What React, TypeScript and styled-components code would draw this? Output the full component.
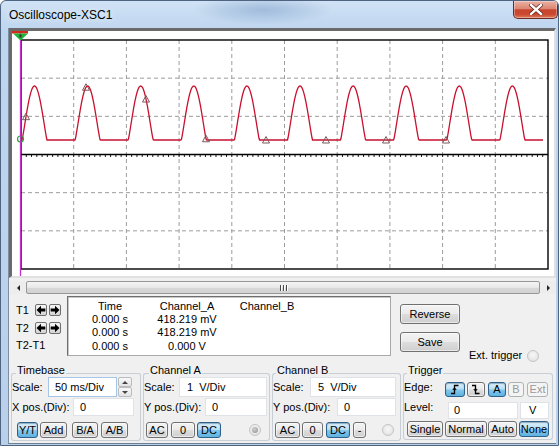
import React from "react";
import styled, { createGlobalStyle, css } from "styled-components";

const GlobalStyle = createGlobalStyle`
  html, body { margin: 0; padding: 0; background: #ffffff; }
  body { font-family: "Liberation Sans", Arial, sans-serif; font-size: 11px; color: #000; }
  *, *::before, *::after { box-sizing: border-box; }
`;

/* ---------- window chrome ---------- */
const Window = styled.div`
  width: 559px;
  height: 446px;
  border: 1px solid #4e6480;
  border-radius: 6px 6px 0 0;
  display: flex;
  flex-direction: column;
  overflow: hidden;
  background:
    radial-gradient(ellipse 70px 15px at 262px 9px, rgba(110, 145, 190, 0.45), rgba(110, 145, 190, 0) 100%),
    linear-gradient(180deg, #d0e2f5 0px, #bfd6ef 28px, #b9d0ea 100%);
`;

const TitleBar = styled.div`
  height: 27px;
  flex: none;
  display: flex;
  justify-content: space-between;
  align-items: flex-start;
`;

const Title = styled.div`
  margin: 7px 0 0 8px;
  font-size: 12px;
  line-height: 14px;
  color: #000;
  text-shadow: 0 0 6px rgba(255, 255, 255, 0.9);
`;

const CloseButton = styled.div`
  width: 45px;
  height: 18px;
  border: 1px solid #6b2a22;
  border-top: none;
  border-radius: 0 0 5px 5px;
  background: linear-gradient(180deg, #eab2a6 0%, #dd8672 45%, #c8452d 52%, #c9492f 78%, #e07a5c 100%);
  box-shadow: inset 0 0 0 1px rgba(255, 255, 255, 0.35);
  display: flex;
  align-items: center;
  justify-content: center;
`;

const Frame = styled.div`
  flex: 1;
  display: flex;
  padding: 0 2px 1px 7px;
  min-height: 0;
`;

const Client = styled.div`
  flex: 1;
  min-width: 0;
  display: flex;
  flex-direction: column;
  background: #f0f0f0;
  border-left: 1px solid #7d8ea3;
  border-bottom: 1px solid #6e7f92;
`;

/* ---------- scope screen ---------- */
const Screen = styled.div`
  height: 250px;
  flex: none;
  background: #ffffff;
  border-style: solid;
  border-width: 3px 2px 2px 3px;
  border-color: #6a6a6a #e0e0e0 #e0e0e0 #6a6a6a;
  svg {
    display: block;
  }
`;

/* ---------- scrollbar ---------- */
const ScrollBar = styled.div`
  height: 13px;
  flex: none;
  margin: 3px 0 0 1px;
  display: flex;
  background: #ededed;
`;

const ScrollArrow = styled.div`
  width: 16px;
  flex: none;
  display: flex;
  align-items: center;
  justify-content: center;
`;

const Tri = styled.span<{ $dir: "left" | "right" | "up" | "down"; $s?: number; $c?: string }>`
  width: 0;
  height: 0;
  border-style: solid;
  ${({ $dir, $s = 3, $c = "#222" }) =>
    $dir === "left"
      ? css`border-width: ${$s}px ${$s}px ${$s}px 0; border-color: transparent ${$c} transparent transparent;`
      : $dir === "right"
      ? css`border-width: ${$s}px 0 ${$s}px ${$s}px; border-color: transparent transparent transparent ${$c};`
      : $dir === "up"
      ? css`border-width: 0 ${$s}px ${$s}px ${$s}px; border-color: transparent transparent ${$c} transparent;`
      : css`border-width: ${$s}px ${$s}px 0 ${$s}px; border-color: ${$c} transparent transparent transparent;`}
`;

const Thumb = styled.div`
  flex: 1;
  border: 1px solid #979797;
  border-radius: 2px;
  background: linear-gradient(180deg, #f5f5f5 0%, #e8e8e8 50%, #d9d9d9 51%, #d2d2d2 100%);
  display: flex;
  align-items: center;
  justify-content: center;
  gap: 2px;
`;

const Grip = styled.span`
  width: 1px;
  height: 6px;
  background: #4a4a4a;
  box-shadow: 1px 0 0 #ffffff;
`;

/* ---------- readout row ---------- */
const Readout = styled.div`
  height: 66px;
  flex: none;
  margin-top: 2px;
  display: flex;
  align-items: flex-start;
`;

const CursorPanel = styled.div`
  width: 58px;
  flex: none;
  padding: 8px 0 0 7px;
  display: flex;
  flex-direction: column;
`;

const CursorRow = styled.div<{ $mt?: number; $h?: number }>`
  display: flex;
  align-items: center;
  height: ${({ $h = 12 }) => $h}px;
  margin-top: ${({ $mt = 0 }) => $mt}px;
  line-height: 13px;
`;

const CursorLabel = styled.span`
  width: 19px;
  flex: none;
`;

const ArrowButton = styled.div<{ $ml?: number }>`
  width: 12px;
  height: 12px;
  flex: none;
  margin-left: ${({ $ml = 0 }) => $ml}px;
  border: 1px solid #6f6f6f;
  border-radius: 2px;
  background: linear-gradient(180deg, #f6f6f6 0%, #e4e4e4 55%, #d3d3d3 100%);
  display: flex;
  align-items: center;
  justify-content: center;
`;

const DataBox = styled.div`
  width: 324px;
  height: 60px;
  flex: none;
  background: #ffffff;
  border: 1px solid;
  border-color: #6e6e6e #a8a8a8 #a8a8a8 #6e6e6e;
  box-shadow: inset 1px 1px 0 #c8c8c8;
  padding-top: 2px;
  display: grid;
  grid-template-columns: 84px 70px 90px;
  grid-template-rows: 14px 13px 13px 14px;
  align-items: center;
  justify-items: center;
  line-height: 13px;
`;

const Cell = styled.span`
  white-space: nowrap;
`;

const SideButtons = styled.div`
  margin-left: 9px;
  display: flex;
  flex-direction: column;
  padding-top: 8px;
  gap: 8px;
`;

const ExtTrigger = styled.div`
  align-self: flex-end;
  margin-left: 9px;
  display: flex;
  align-items: center;
  gap: 5px;
  line-height: 13px;
`;

const Radio = styled.span<{ $checked?: boolean }>`
  width: 12px;
  height: 12px;
  flex: none;
  border-radius: 50%;
  border: 1px solid #c4c4c4;
  background: radial-gradient(circle at 50% 40%, #f7f7f7 0%, #e6e6e6 70%, #d8d8d8 100%);
  display: flex;
  align-items: center;
  justify-content: center;
  &::after {
    content: "";
    width: 6px;
    height: 6px;
    border-radius: 50%;
    background: ${({ $checked }) =>
      $checked ? "radial-gradient(circle at 40% 35%, #d0d0d0, #8f8f8f)" : "transparent"};
  }
`;

/* ---------- controls ---------- */
const Controls = styled.div`
  margin-top: 2px;
  padding-left: 2px;
  display: flex;
  gap: 2px;
  flex: none;
`;

const GROUP_LINE = "#c6ced6";

const GroupBox = styled.div<{ $w: number }>`
  width: ${({ $w }) => $w}px;
  flex: none;
  display: flex;
  flex-direction: column;
`;

const GroupHead = styled.div`
  height: 13px;
  display: flex;
`;

const HeadLine = styled.span<{ $side: "left" | "right"; $w?: number }>`
  margin-top: 9px;
  border-top: 1px solid ${GROUP_LINE};
  ${({ $side, $w }) =>
    $side === "left"
      ? css`
          width: ${$w}px;
          flex: none;
          border-left: 1px solid ${GROUP_LINE};
          border-top-left-radius: 3px;
        `
      : css`
          flex: 1;
          border-right: 1px solid ${GROUP_LINE};
          border-top-right-radius: 3px;
        `}
`;

const Legend = styled.span`
  line-height: 13px;
  padding: 0 1px;
  white-space: nowrap;
`;

const GroupBody = styled.div`
  border: 1px solid ${GROUP_LINE};
  border-top: none;
  border-radius: 0 0 3px 3px;
  padding-bottom: 2px;
  display: flex;
  flex-direction: column;
`;

const Row = styled.div<{ $h: number; $mt?: number; $pl?: number; $align?: string }>`
  height: ${({ $h }) => $h}px;
  margin-top: ${({ $mt = 0 }) => $mt}px;
  padding-left: ${({ $pl = 0 }) => $pl}px;
  display: flex;
  align-items: ${({ $align = "center" }) => $align};
`;

const Label = styled.span<{ $w: number; $self?: string }>`
  width: ${({ $w }) => $w}px;
  flex: none;
  white-space: nowrap;
  line-height: 13px;
  align-self: ${({ $self = "center" }) => $self};
`;

const Field = styled.div<{ $w: number; $h: number; $ml?: number; $focus?: boolean; $pl?: number }>`
  width: ${({ $w }) => $w}px;
  height: ${({ $h }) => $h}px;
  flex: none;
  margin-left: ${({ $ml = 0 }) => $ml}px;
  background: #ffffff;
  border: 1px solid ${({ $focus }) => ($focus ? "#a7c5e6" : "#dfe2e6")};
  display: flex;
  align-items: center;
  padding-left: ${({ $pl = 6 }) => $pl}px;
  white-space: pre;
`;

const Spinner = styled.div`
  width: 14px;
  height: 20px;
  margin-left: 1px;
  flex: none;
  display: flex;
  flex-direction: column;
`;

const SpinHalf = styled.div`
  flex: 1;
  border: 1px solid #b9bcc0;
  border-radius: 2px;
  background: linear-gradient(180deg, #f8f8f8, #e3e3e3);
  display: flex;
  align-items: center;
  justify-content: center;
`;

type Variant = "normal" | "active" | "disabled";

const Btn = styled.div<{ $w: number; $h: number; $ml?: number; $v?: Variant }>`
  width: ${({ $w }) => $w}px;
  height: ${({ $h }) => $h}px;
  flex: none;
  margin-left: ${({ $ml = 0 }) => $ml}px;
  border-radius: 3px;
  display: flex;
  align-items: center;
  justify-content: center;
  white-space: nowrap;
  line-height: 1;
  ${({ $v = "normal" }) =>
    $v === "active"
      ? css`
          border: 1px solid #2c628b;
          background: linear-gradient(180deg, #dff1fb 0%, #b6def4 48%, #86c7ec 52%, #5fb2e0 100%);
          box-shadow: inset 0 1px 1px rgba(0, 40, 80, 0.35);
          color: #000;
        `
      : $v === "disabled"
      ? css`
          border: 1px solid #adb2b5;
          background: #f4f4f4;
          color: #9a9a9a;
        `
      : css`
          border: 1px solid #707070;
          background: linear-gradient(180deg, #f3f3f3 0%, #ebebeb 48%, #dddddd 52%, #cfcfcf 100%);
          box-shadow: inset 0 0 0 1px rgba(255, 255, 255, 0.55);
          color: #000;
        `}
`;

/* ---------- scope drawing data ---------- */
const X0 = 21;
const X1 = 548;
const Y0 = 40;
const Y1 = 269;
const DX = (X1 - X0) / 10;
const DY = (Y1 - Y0) / 6;
const YC = Y0 + DY * 3;

const P0 = 34.5;
const PER = 53.1;
const HW = 12.5;
const AMP = 54;
const BASE = 140;

function wave(x: number): number {
  let h = 0;
  for (let k = 0; k < 10; k++) {
    const d = x - (P0 + PER * k);
    if (Math.abs(d) < HW) {
      h = Math.max(h, Math.pow(Math.cos((Math.PI / 2) * (d / HW)), 1.15));
    }
  }
  return BASE - AMP * h;
}

const wavePath = (() => {
  const pts: string[] = [];
  for (let x = 20.5; x <= 543; x += 0.5) {
    pts.push(`${x.toFixed(1)},${wave(x).toFixed(2)}`);
  }
  return "M" + pts.join(" L");
})();

const vLines = Array.from({ length: 9 }, (_, i) => X0 + DX * (i + 1));
const hLines = [1, 2, 4, 5].map((i) => Y0 + DY * i);
const ticks = Array.from({ length: 99 }, (_, i) => X0 + (DX / 10) * (i + 1));
const markers = [26, 86, 146, 206, 266, 326, 386, 446].map((x) => ({ x, y: wave(x) }));

const ScopeDrawing: React.FC = () => (
  <svg width={542} height={245} viewBox="12 31 542 245">
    {vLines.map((x) => (
      <line key={"v" + x} x1={x} y1={Y0} x2={x} y2={Y1} stroke="#9c9c9c" strokeWidth={1} strokeDasharray="4 3" />
    ))}
    {hLines.map((y) => (
      <line key={"h" + y} x1={X0} y1={y} x2={X1} y2={y} stroke="#9c9c9c" strokeWidth={1} strokeDasharray="4 3" />
    ))}
    <rect x={X0} y={Y0} width={X1 - X0} height={Y1 - Y0} fill="none" stroke="#000" strokeWidth={1.4} />
    <line x1={X0} y1={YC} x2={X1} y2={YC} stroke="#000" strokeWidth={1.4} />
    {ticks.map((x) => (
      <line key={"t" + x} x1={x} y1={YC} x2={x} y2={YC + 2.5} stroke="#000" strokeWidth={0.9} />
    ))}
    <path d={wavePath} fill="none" stroke="#c8102e" strokeWidth={1.3} strokeLinejoin="round" />
    {markers.map((m) => (
      <polygon
        key={"m" + m.x}
        points={`${m.x - 3.5},${m.y + 3} ${m.x + 3.5},${m.y + 3} ${m.x},${m.y - 3.5}`}
        fill="none"
        stroke="#7a5a5a"
        strokeWidth={1}
      />
    ))}
    <circle cx={20.5} cy={139} r={3} fill="none" stroke="#22a83a" strokeWidth={1.2} />
    <line x1={20.5} y1={33} x2={20.5} y2={276} stroke="#c42fc8" strokeWidth={1.3} />
    <rect x={12} y={31} width={16} height={2.5} fill="#d42a1e" />
    <polygon points="13,33.5 28,33.5 20.5,40.5" fill="#1fb33a" />
    <rect x={19.5} y={34.5} width={2} height={3} fill="#333" />
  </svg>
);

/* ---------- small icons ---------- */
const CloseX = () => (
  <svg width={14} height={11} viewBox="0 0 14 11">
    <path d="M2 1 L12 10 M12 1 L2 10" stroke="#5a1f17" strokeWidth={3.8} strokeLinecap="square" />
    <path d="M2 1 L12 10 M12 1 L2 10" stroke="#ffffff" strokeWidth={2.4} strokeLinecap="square" />
  </svg>
);

const BlockArrow = ({ dir }: { dir: "left" | "right" }) => (
  <svg width={10} height={10} viewBox="0 0 10 10">
    <path
      d={dir === "left" ? "M0.5 5 L5 0.8 V3.4 H9.3 V6.6 H5 V9.2 Z" : "M9.5 5 L5 0.8 V3.4 H0.7 V6.6 H5 V9.2 Z"}
      fill="#000"
    />
  </svg>
);

const EdgeIcon = ({ rising }: { rising: boolean }) => (
  <svg width={12} height={11} viewBox="0 0 12 11">
    <path
      d={rising ? "M2 9.5 H5.5 V1.5 H9.5" : "M2 1.5 H5.5 V9.5 H9.5"}
      fill="none"
      stroke="#000"
      strokeWidth={1.3}
    />
    <path d={rising ? "M3.8 6 L5.5 4 L7.2 6" : "M3.8 5 L5.5 7 L7.2 5"} fill="none" stroke="#000" strokeWidth={1.1} />
  </svg>
);

/* ---------- app ---------- */
export default function App() {
  return (
    <>
      <GlobalStyle />
      <Window>
        <TitleBar>
          <Title>Oscilloscope-XSC1</Title>
          <CloseButton>
            <CloseX />
          </CloseButton>
        </TitleBar>
        <Frame>
          <Client>
            <Screen>
              <ScopeDrawing />
            </Screen>

            <ScrollBar>
              <ScrollArrow>
                <Tri $dir="left" $s={3} />
              </ScrollArrow>
              <Thumb>
                <Grip />
                <Grip />
                <Grip />
              </Thumb>
              <ScrollArrow>
                <Tri $dir="right" $s={3} />
              </ScrollArrow>
            </ScrollBar>

            <Readout>
              <CursorPanel>
                <CursorRow>
                  <CursorLabel>T1</CursorLabel>
                  <ArrowButton>
                    <BlockArrow dir="left" />
                  </ArrowButton>
                  <ArrowButton $ml={2}>
                    <BlockArrow dir="right" />
                  </ArrowButton>
                </CursorRow>
                <CursorRow $mt={6}>
                  <CursorLabel>T2</CursorLabel>
                  <ArrowButton>
                    <BlockArrow dir="left" />
                  </ArrowButton>
                  <ArrowButton $ml={2}>
                    <BlockArrow dir="right" />
                  </ArrowButton>
                </CursorRow>
                <CursorRow $mt={5} $h={13}>
                  <span>T2-T1</span>
                </CursorRow>
              </CursorPanel>

              <DataBox>
                <Cell>Time</Cell>
                <Cell>Channel_A</Cell>
                <Cell>Channel_B</Cell>
                <Cell>0.000 s</Cell>
                <Cell>418.219 mV</Cell>
                <Cell />
                <Cell>0.000 s</Cell>
                <Cell>418.219 mV</Cell>
                <Cell />
                <Cell>0.000 s</Cell>
                <Cell>0.000 V</Cell>
                <Cell />
              </DataBox>

              <SideButtons>
                <Btn $w={60} $h={20}>Reverse</Btn>
                <Btn $w={60} $h={20}>Save</Btn>
              </SideButtons>

              <ExtTrigger>
                <span>Ext. trigger</span>
                <Radio />
              </ExtTrigger>
            </Readout>

            <Controls>
              <GroupBox $w={130}>
                <GroupHead>
                  <HeadLine $side="left" $w={5} />
                  <Legend>Timebase</Legend>
                  <HeadLine $side="right" />
                </GroupHead>
                <GroupBody>
                  <Row $h={20}>
                    <Label $w={36}>Scale:</Label>
                    <Field $w={69} $h={20} $focus>50 ms/Div</Field>
                    <Spinner>
                      <SpinHalf>
                        <Tri $dir="up" $s={3} $c="#444" />
                      </SpinHalf>
                      <SpinHalf>
                        <Tri $dir="down" $s={3} $c="#444" />
                      </SpinHalf>
                    </Spinner>
                  </Row>
                  <Row $h={18} $mt={1}>
                    <Label $w={61}>X pos.(Div):</Label>
                    <Field $w={61} $h={18}>0</Field>
                  </Row>
                  <Row $h={16} $mt={6} $pl={5}>
                    <Btn $w={21} $h={16} $v="active">Y/T</Btn>
                    <Btn $w={27} $h={16} $ml={2}>Add</Btn>
                    <Btn $w={26} $h={16} $ml={5}>B/A</Btn>
                    <Btn $w={27} $h={16} $ml={3}>A/B</Btn>
                  </Row>
                </GroupBody>
              </GroupBox>

              <GroupBox $w={127}>
                <GroupHead>
                  <HeadLine $side="left" $w={6} />
                  <Legend>Channel A</Legend>
                  <HeadLine $side="right" />
                </GroupHead>
                <GroupBody>
                  <Row $h={20}>
                    <Label $w={35}>Scale:</Label>
                    <Field $w={88} $h={20} $pl={7}>1  V/Div</Field>
                  </Row>
                  <Row $h={18} $mt={1}>
                    <Label $w={61}>Y pos.(Div):</Label>
                    <Field $w={62} $h={18}>0</Field>
                  </Row>
                  <Row $h={16} $mt={6} $pl={2}>
                    <Btn $w={22} $h={16}>AC</Btn>
                    <Btn $w={24} $h={16} $ml={3}>0</Btn>
                    <Btn $w={24} $h={16} $ml={2} $v="active">DC</Btn>
                    <Radio $checked style={{ marginLeft: 28 }} />
                  </Row>
                </GroupBody>
              </GroupBox>

              <GroupBox $w={129}>
                <GroupHead>
                  <HeadLine $side="left" $w={4} />
                  <Legend>Channel B</Legend>
                  <HeadLine $side="right" />
                </GroupHead>
                <GroupBody>
                  <Row $h={20}>
                    <Label $w={37}>Scale:</Label>
                    <Field $w={86} $h={20} $pl={7}>5  V/Div</Field>
                  </Row>
                  <Row $h={18} $mt={1}>
                    <Label $w={64}>Y pos.(Div):</Label>
                    <Field $w={59} $h={18}>0</Field>
                  </Row>
                  <Row $h={16} $mt={6} $pl={2}>
                    <Btn $w={25} $h={16}>AC</Btn>
                    <Btn $w={21} $h={16} $ml={2}>0</Btn>
                    <Btn $w={24} $h={16} $ml={3} $v="active">DC</Btn>
                    <Btn $w={13} $h={16} $ml={3}>-</Btn>
                    <Radio style={{ marginLeft: 16 }} />
                  </Row>
                </GroupBody>
              </GroupBox>

              <GroupBox $w={150}>
                <GroupHead>
                  <HeadLine $side="left" $w={4} />
                  <Legend>Trigger</Legend>
                  <HeadLine $side="right" />
                </GroupHead>
                <GroupBody>
                  <Row $h={20} $align="flex-end">
                    <Label $w={41}>Edge:</Label>
                    <Btn $w={20} $h={15} $v="active">
                      <EdgeIcon rising />
                    </Btn>
                    <Btn $w={18} $h={15} $ml={2}>
                      <EdgeIcon rising={false} />
                    </Btn>
                    <Btn $w={18} $h={15} $ml={3} $v="active">A</Btn>
                    <Btn $w={16} $h={15} $ml={2} $v="disabled">B</Btn>
                    <Btn $w={21} $h={15} $ml={3} $v="disabled">Ext</Btn>
                  </Row>
                  <Row $h={18} $mt={4}>
                    <Label $w={44} $self="flex-start">Level:</Label>
                    <Field $w={70} $h={17} $pl={5}>0</Field>
                    <Field $w={29} $h={17} $ml={2} $pl={8}>V</Field>
                  </Row>
                  <Row $h={16} $mt={2} $pl={3}>
                    <Btn $w={36} $h={16}>Single</Btn>
                    <Btn $w={42} $h={16} $ml={2}>Normal</Btn>
                    <Btn $w={29} $h={16} $ml={1}>Auto</Btn>
                    <Btn $w={30} $h={16} $ml={2} $v="active">None</Btn>
                  </Row>
                </GroupBody>
              </GroupBox>
            </Controls>
          </Client>
        </Frame>
      </Window>
    </>
  );
}
